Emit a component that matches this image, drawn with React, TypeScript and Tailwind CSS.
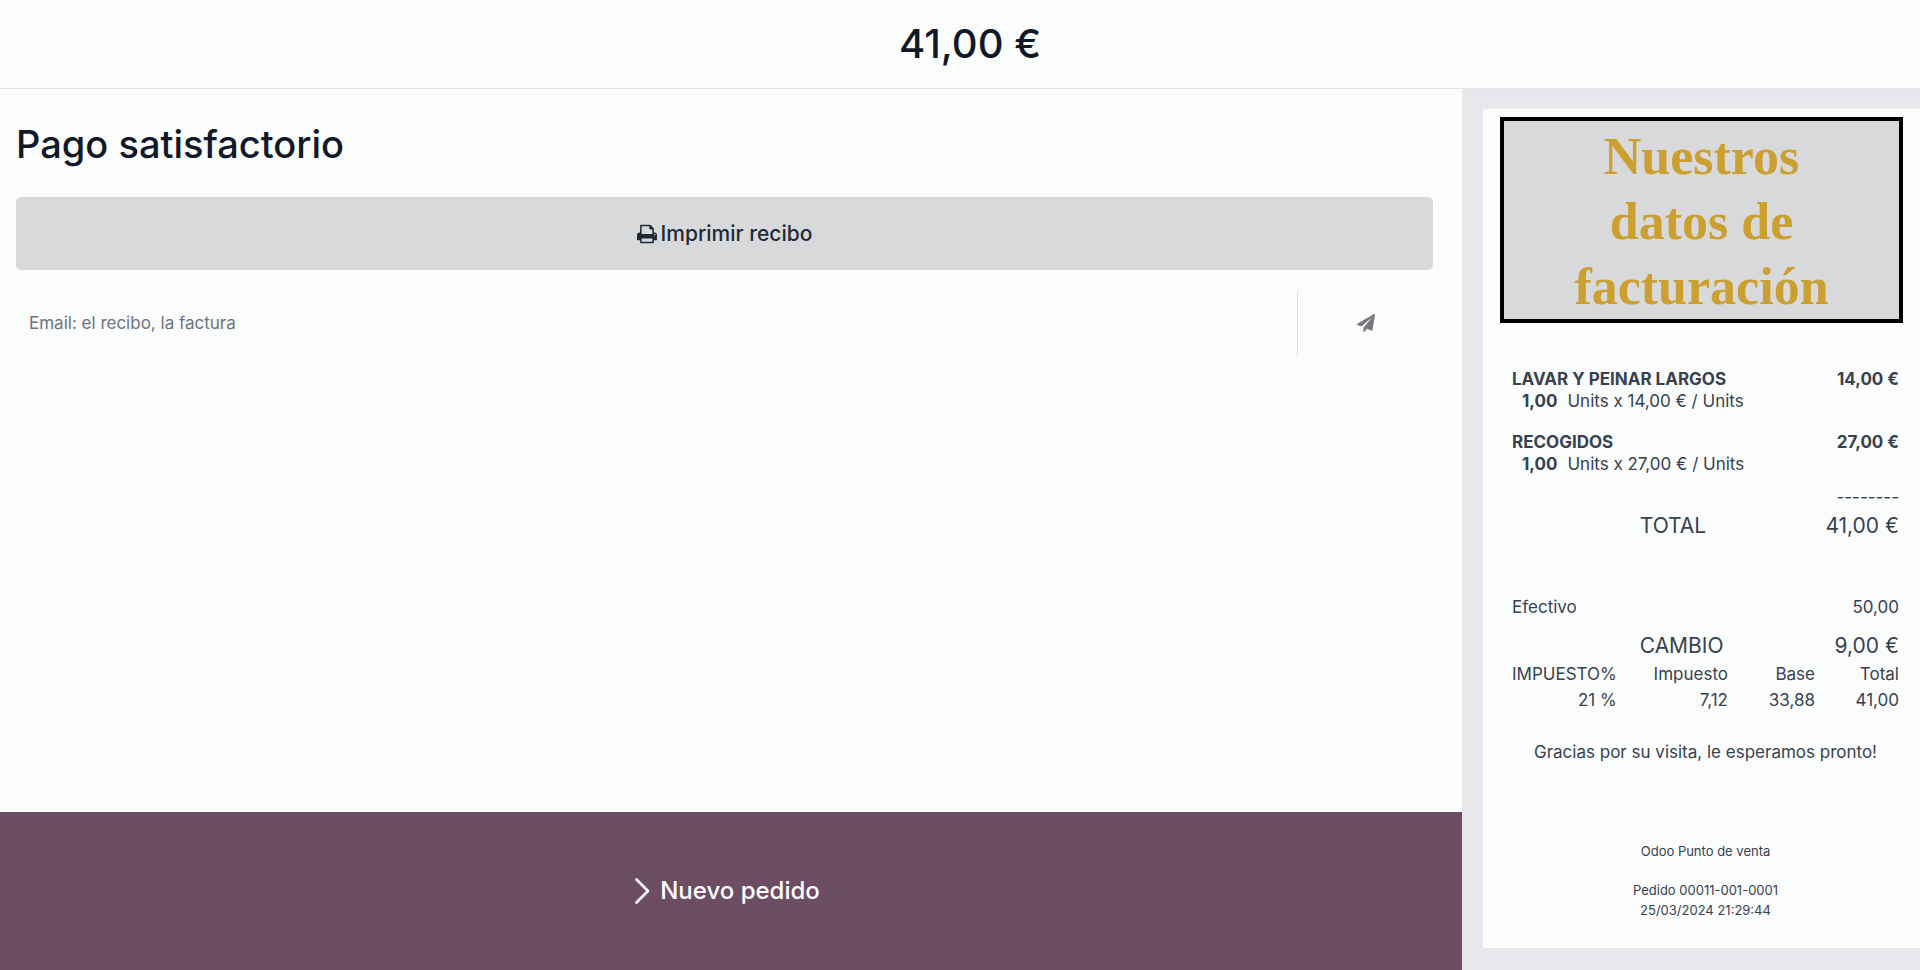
interface OrderLine {
  name: string;
  qty: string;
  unitPrice: string;
  total: string;
}

const orderLines: OrderLine[] = [
  { name: "LAVAR Y PEINAR LARGOS", qty: "1,00", unitPrice: "14,00 €", total: "14,00 €" },
  { name: "RECOGIDOS", qty: "1,00", unitPrice: "27,00 €", total: "27,00 €" },
];

const taxes = [{ rate: "21 %", amount: "7,12", base: "33,88", total: "41,00" }];

function PrintIcon() {
  return (
    <svg viewBox="0 0 1664 1792" className="h-[22px] w-5" fill="currentColor" aria-hidden="true">
      <path d="M384 1536h896v-256h-896v256zM384 896h896v-384h-160q-40 0-68-28t-28-68v-160h-640v640zM1536 960q0-26-19-45t-45-19-45 19-19 45 19 45 45 19 45-19 19-45zM1664 960v416q0 13-9.5 22.5t-22.5 9.5h-224v160q0 40-28 68t-68 28h-960q-40 0-68-28t-28-68v-160h-224q-13 0-22.5-9.5t-9.5-22.5v-416q0-79 56.5-135.5t135.5-56.5h64v-544q0-40 28-68t68-28h672q40 0 88 20t76 48l152 152q28 28 48 76t20 88v256h64q79 0 135.5 56.5t56.5 135.5z" />
    </svg>
  );
}

function PaperPlaneIcon() {
  return (
    <svg viewBox="0 0 1792 1792" className="size-[18px]" fill="currentColor" aria-hidden="true">
      <path d="M1764 11q33 24 27 64l-256 1536q-5 29-32 45-14 8-31 8-11 0-24-5l-453-185-242 295q-18 23-49 23-13 0-22-4-19-7-30.5-23.5t-11.5-36.5v-349l864-1059-1069 925-395-162q-37-14-40-55-2-40 32-59l1664-960q15-9 32-9 20 0 36 11z" />
    </svg>
  );
}

function ChevronIcon() {
  return (
    <svg
      viewBox="0 0 16 28"
      className="h-7 w-4"
      fill="none"
      stroke="currentColor"
      strokeWidth="2.6"
      strokeLinecap="round"
      strokeLinejoin="round"
      aria-hidden="true"
    >
      <path d="M2.5 2.5L14 14L2.5 25.5" />
    </svg>
  );
}

function Receipt() {
  return (
    <div className="rounded-l-xs bg-[#fbfdfc] px-[17px] pt-2 pb-7 text-[#374151]">
      {/* Company banner */}
      <div className="flex h-[206px] items-center justify-center border-4 border-black bg-[#d8d9db] pt-[3px]">
        <p className="text-center font-['Liberation_Serif',serif] text-[52px] leading-[65px] font-bold text-[#cb9f30]">
          Nuestros
          <br />
          datos de
          <br />
          facturación
        </p>
      </div>

      <div className="mt-[45px] pr-1 pl-3 text-[17px] leading-[22px]">
        {/* Order lines */}
        <ul className="flex flex-col gap-[19px]">
          {orderLines.map((line) => (
            <li key={line.name}>
              <div className="flex justify-between font-bold">
                <span>{line.name}</span>
                <span>{line.total}</span>
              </div>
              <div className="flex gap-2.5 pl-2.5">
                <span className="font-bold">{line.qty}</span>
                <span>Units x {line.unitPrice} / Units</span>
              </div>
            </li>
          ))}
        </ul>

        <div className="mt-[11px] text-right">--------</div>
        <div className="mt-1 flex justify-between text-[21px] leading-7">
          <span className="ml-[33%]">TOTAL</span>
          <span>41,00 €</span>
        </div>

        {/* Payments */}
        <div className="mt-14 flex justify-between">
          <span>Efectivo</span>
          <span>50,00</span>
        </div>
        <div className="mt-3.5 flex justify-between text-[21px] leading-7">
          <span className="ml-[33%]">CAMBIO</span>
          <span>9,00 €</span>
        </div>

        {/* Taxes */}
        <table className="mt-px w-full text-right leading-[26px]">
          <thead>
            <tr>
              <th className="w-[102px] font-normal">IMPUESTO%</th>
              <th className="font-normal">Impuesto</th>
              <th className="w-[87px] font-normal">Base</th>
              <th className="w-[84px] font-normal">Total</th>
            </tr>
          </thead>
          <tbody>
            {taxes.map((tax) => (
              <tr key={tax.rate}>
                <td>{tax.rate}</td>
                <td>{tax.amount}</td>
                <td>{tax.base}</td>
                <td>{tax.total}</td>
              </tr>
            ))}
          </tbody>
        </table>

        <p className="mt-7 text-center">Gracias por su visita, le esperamos pronto!</p>

        <div className="mt-[78px] text-center text-[13px] leading-5">
          <p>Odoo Punto de venta</p>
          <p className="mt-[19px]">Pedido 00011-001-0001</p>
          <p>25/03/2024 21:29:44</p>
        </div>
      </div>
    </div>
  );
}

export default function App() {
  return (
    <div className="flex min-h-screen flex-col bg-[#fbfdfc] font-[Inter,sans-serif] text-[#111827]">
      <header className="flex h-[89px] items-center justify-center border-b border-[#e1e3e5] pl-5">
        <h1 className="text-[40px] leading-[48px] font-medium">41,00 €</h1>
      </header>

      <div className="flex grow">
        <main className="flex grow flex-col">
          <section className="flex grow flex-col pt-[31px] pr-[29px] pl-4">
            <h2 className="text-[38px] leading-[48px] font-medium">Pago satisfactorio</h2>

            <button
              type="button"
              className="mt-[29px] flex h-[73px] items-center justify-center gap-1 rounded-[5px] bg-[#d8d9db] text-[21px] font-medium text-[#1f2937]"
            >
              <PrintIcon />
              Imprimir recibo
            </button>

            <form className="mt-5 flex h-[66px]">
              <input
                type="email"
                aria-label="Email"
                placeholder="Email: el recibo, la factura"
                className="grow px-[13px] pt-0.5 text-[17px] outline-none placeholder:text-[#6b7280]"
              />
              <button
                type="button"
                aria-label="Enviar"
                className="flex w-[136px] items-center justify-center border-l border-[#e1e3e5] text-[#77787f]"
              >
                <PaperPlaneIcon />
              </button>
            </form>
          </section>

          <button
            type="button"
            className="flex h-[158px] items-center justify-center gap-2.5 bg-[#6c4d64] pr-2 text-[24px] font-medium text-white"
          >
            <ChevronIcon />
            Nuevo pedido
          </button>
        </main>

        <aside className="w-[458px] shrink-0 bg-[#e7e8ec] pt-5 pb-[21px] pl-[21px]">
          <Receipt />
        </aside>
      </div>
    </div>
  );
}
